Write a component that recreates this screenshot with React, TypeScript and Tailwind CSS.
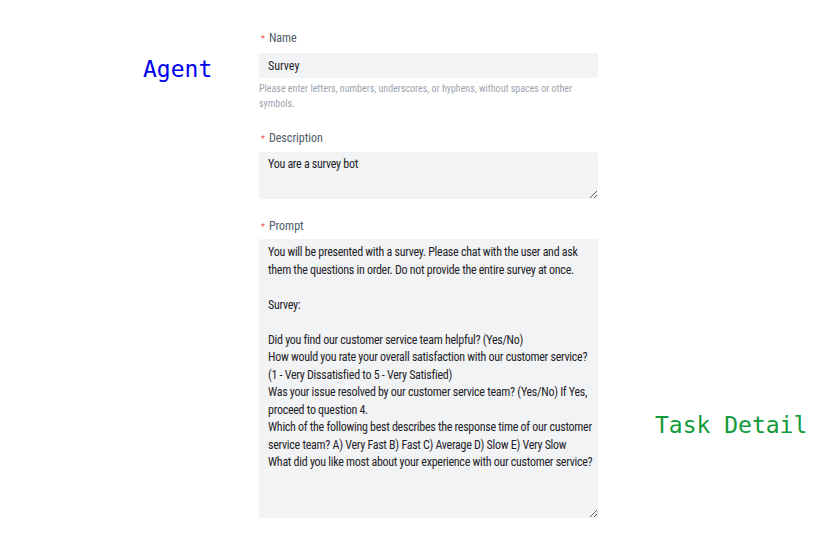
const prompt = `You will be presented with a survey. Please chat with the user and ask them the questions in order. Do not provide the entire survey at once.

Survey:

Did you find our customer service team helpful? (Yes/No)
How would you rate your overall satisfaction with our customer service? (1 - Very Dissatisfied to 5 - Very Satisfied)
Was your issue resolved by our customer service team? (Yes/No) If Yes, proceed to question 4.
Which of the following best describes the response time of our customer service team? A) Very Fast B) Fast C) Average D) Slow E) Very Slow
What did you like most about your experience with our customer service?`;

function Label({ text }: { text: string }) {
  return (
    <div className="flex items-center gap-[4px] pl-[2px] text-[12px] leading-[16px] text-[#4e5969]">
      <span className="mt-[3px] text-[9px] text-[#f05454]">*</span>
      <span>{text}</span>
    </div>
  );
}

export default function App() {
  return (
    <div className="flex h-[536px] w-[821px] bg-white font-['Liberation_Sans_Narrow','Roboto_Condensed',sans-serif]">
      <div className="w-[259px] shrink-0 pl-[143px] pt-[52px]">
        <span className="font-['DejaVu_Sans_Mono',monospace] text-[23px] text-[#0000f0]">Agent</span>
      </div>

      <div className="flex w-[339px] shrink-0 flex-col pt-[28px]">
        <Label text="Name" />
        <input
          readOnly
          value="Survey"
          className="mt-[6px] h-[25px] w-full rounded-[2px] bg-[#f2f3f5] px-[9px] text-[12px] text-[#1f2329] outline-none"
        />
        <p className="mt-[3px] text-[10px] leading-[15px] text-[#9ca3af]">
          Please enter letters, numbers, underscores, or hyphens, without spaces or other symbols.
        </p>

        <div className="mt-[17px]">
          <Label text="Description" />
        </div>
        <textarea
          readOnly
          value="You are a survey bot"
          className="mt-[5px] h-[47px] w-full rounded-[2px] bg-[#f2f3f5] py-[4px] pl-[9px] pr-[5.5px] text-[12px] leading-[17.5px] tracking-[-0.28px] text-[#1f2329] outline-none"
        />

        <div className="mt-[17px]">
          <Label text="Prompt" />
        </div>
        <textarea
          readOnly
          value={prompt}
          className="mt-[4px] h-[279px] w-full overflow-hidden rounded-[2px] bg-[#f2f3f5] py-[5px] pl-[9px] pr-[5.5px] text-[12px] leading-[17.5px] tracking-[-0.28px] text-[#1f2329] outline-none"
        />
      </div>

      <div className="flex-1 pl-[57px] pt-[408px]">
        <span className="font-['DejaVu_Sans_Mono',monospace] text-[23px] text-[#119a3a]">Task Detail</span>
      </div>
    </div>
  );
}
